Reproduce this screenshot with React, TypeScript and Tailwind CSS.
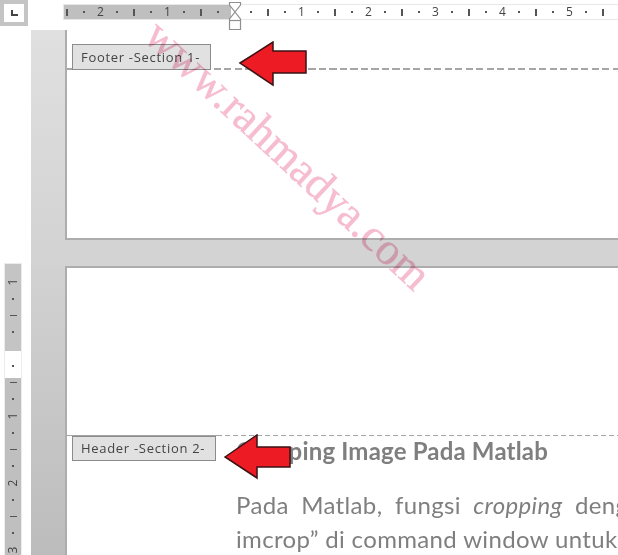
import React from 'react';

const topTicks = ['|', '.', '2', '.', '|', '.', '1', '.', '|', '.', '', '.', '|', '.', '1', '.', '|', '.', '2', '.', '|', '.', '3', '.', '|', '.', '4', '.', '|', '.', '5', '.', '|', '.'];
const sideTicks = ['1', '.', '|', '.', '', '.', '|', '.', '1', '.', '|', '.', '2', '.', '|', '.', '3'];

const Tick: React.FC<{ value: string; vertical?: boolean }> = ({ value, vertical }) => {
    if (value === '') return null;
    if (value === '.') return <span className="w-[2px] h-[2px] bg-[#555]" />;
    if (value === '|') return <span className={vertical ? 'w-[7px] h-[1.5px] bg-[#555]' : 'w-[1.5px] h-[7px] bg-[#555]'} />;
    return <span className={vertical ? '-rotate-90 text-[12px] leading-none text-[#444]' : 'text-[12px] leading-none text-[#444]'}>{value}</span>;
};

const App: React.FC = () => {
    return (
        <div className="relative w-[618px] h-[555px] overflow-hidden bg-white blur-[0.4px] font-['Open_Sans',sans-serif]">
            {/* top bar */}
            <div className="flex h-[30px]">
                <div className="w-[28px] h-[26px] shrink-0 border-[4px] border-[#c4c4c4] bg-white flex items-center justify-center">
                    <div className="w-[7px] h-[6px] border-l-2 border-b-2 border-[#444]" />
                </div>
                <div className="ml-[36px] mt-[5px] h-[14px] flex-1 min-w-0 overflow-hidden flex items-center bg-[linear-gradient(90deg,#bfbfbf_167px,#ffffff_167px)] shadow-[0_0_0_1px_#e8e8e8]">
                    <div className="flex items-center ml-[-5.4px]">
                        {topTicks.map((t, i) => (
                            <div key={i} className="w-[16.75px] shrink-0 flex items-center justify-center">
                                <Tick value={t} />
                            </div>
                        ))}
                    </div>
                </div>
            </div>

            {/* body */}
            <div className="flex h-[525px]">
                <div className="w-[31px] shrink-0 pl-[5px] pt-[234px]">
                    <div className="w-[16px] h-[291px] pt-[9.6px] bg-[linear-gradient(180deg,#c4c4c4_87px,#ffffff_87px,#ffffff_114px,#bfbfbf_114px)] shadow-[0_0_0_1px_#ececec]">
                        {sideTicks.map((t, i) => (
                            <div key={i} className="h-[16.75px] flex items-center justify-center">
                                <Tick value={t} vertical />
                            </div>
                        ))}
                    </div>
                </div>
                <div className="flex-1 min-w-0 flex flex-col bg-[linear-gradient(180deg,#e0e0e0,#d2d2d2_45%,#bcbcbc)]">
                    <div className="ml-[34px] h-[210px] bg-white border-l-2 border-b-2 border-[#adadad]">
                        <div className="mt-[38px] h-[2px] bg-[repeating-linear-gradient(90deg,#a6a6a6_0_7px,transparent_7px_10.5px)]" />
                    </div>
                    <div className="h-[26px] bg-[#d3d3d3]" />
                    <div className="ml-[34px] flex-1 bg-white border-l-2 border-t-2 border-[#adadad] overflow-hidden">
                        <div className="mt-[167px] h-[1px] bg-[linear-gradient(90deg,#a3a3a3_150px,transparent_150px)]">
                            <div className="ml-[150px] h-[1px] bg-[repeating-linear-gradient(90deg,#a3a3a3_0_5px,transparent_5px_8px)]" />
                        </div>
                        <div className="pl-[169px] font-['Lato',sans-serif] text-[#7f7f7f] whitespace-nowrap">
                            <div className="h-[30px] text-[24px] leading-[30px] font-bold tracking-[0.18px]">Cropping Image Pada Matlab</div>
                            <div className="mt-[22px] h-[34px] text-[24px] leading-[34px] tracking-[0.35px] [word-spacing:6px]">
                                Pada Matlab, fungsi <em>cropping</em> dengan
                            </div>
                            <div className="h-[34px] text-[24px] leading-[34px] tracking-[0.35px]">imcrop” di command window untuk</div>
                        </div>
                    </div>
                </div>
            </div>

            {/* section labels */}
            <div className="absolute left-[72px] top-[44px] w-[139px] h-[26px] border border-[#8c8c8c] bg-[#e1e1e1] pl-[8px] text-[13px] tracking-[0.7px] whitespace-nowrap leading-[25px] text-[#444]">
                Footer -Section 1-
            </div>
            <div className="absolute left-[72px] top-[436px] w-[144px] h-[25px] border border-[#8c8c8c] bg-[#e1e1e1] pl-[8px] text-[13px] tracking-[0.7px] whitespace-nowrap leading-[23px] text-[#444]">
                Header -Section 2-
            </div>

            {/* ruler indent marker */}
            <svg className="absolute left-[228px] top-[1px]" width="14" height="30" viewBox="0 0 14 30">
                <path d="M1.5 1.5 H12.5 V4 L7 11 L12.5 18 V28.5 H1.5 V18 L7 11 L1.5 4 Z" fill="#fff" stroke="#8f8f8f" strokeWidth="1.2" />
                <path d="M1.5 19.5 H12.5" stroke="#8f8f8f" strokeWidth="1.2" />
            </svg>

            {/* arrows */}
            <svg className="absolute left-[238px] top-[41px]" width="70" height="46" viewBox="0 0 70 46">
                <path d="M2 22 L35 1 L35 10 L68 10 L68 32 L35 32 L35 44 Z" fill="#ed1c24" stroke="#3a1214" strokeWidth="1.5" />
            </svg>
            <svg className="absolute left-[224px] top-[434px]" width="68" height="46" viewBox="0 0 68 46">
                <path d="M1 23 L33 1 L33 13 L66 13 L66 33 L33 33 L33 44 Z" fill="#ed1c24" stroke="#3a1214" strokeWidth="1.5" />
            </svg>

            {/* watermark */}
            <div className="absolute left-[288px] top-[155px] -translate-x-1/2 -translate-y-1/2 rotate-[43deg] whitespace-nowrap font-['Liberation_Serif',serif] text-[45px] leading-none text-[#f6bcd0] mix-blend-multiply [-webkit-text-stroke:0.4px_#f6bcd0]">
                www.rahmadya.com
            </div>
        </div>
    );
};

export default App;
